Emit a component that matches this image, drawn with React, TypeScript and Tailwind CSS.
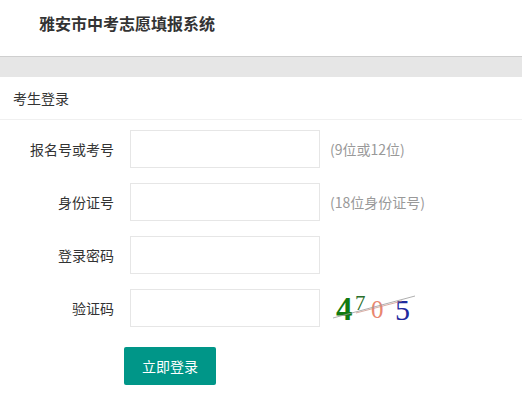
const cjk = { fontFamily: '"Noto Sans CJK SC", "Liberation Sans", sans-serif' }

function Captcha() {
  return (
    <svg width="92" height="38" viewBox="0 0 92 38" className="ml-[10px]">
      <text x="6" y="31" fill="#117a11" fontSize="33" fontWeight="bold" fontFamily="Liberation Serif, serif">4</text>
      <text x="25" y="21" fill="#2a6e2a" fontSize="21" fontFamily="Liberation Serif, serif">7</text>
      <text x="41" y="29" fill="#e9866f" fontSize="25" fontFamily="Liberation Serif, serif">0</text>
      <text x="65" y="31" fill="#1f2a9e" fontSize="30" fontFamily="Liberation Serif, serif">5</text>
      <line x1="3" y1="29" x2="85" y2="7" stroke="#9a9a9a" strokeWidth="0.8" />
      <line x1="26" y1="24" x2="72" y2="12" stroke="#c98a7c" strokeWidth="0.7" />
    </svg>
  )
}

function Row({ label, hint, children }: { label: string; hint?: string; children?: React.ReactNode }) {
  return (
    <div className="flex items-center h-[38px] mb-[15px]">
      <label className="w-[130px] pr-[16px] text-right text-[14px] text-[#333]">{label}</label>
      <input className="w-[190px] h-[38px] border border-[#e6e6e6] bg-white outline-none px-2" />
      {hint && <span className="ml-[10px] text-[14px] text-[#999]">{hint}</span>}
      {children}
    </div>
  )
}

export default function App() {
  return (
    <div className="w-full min-h-screen bg-white" style={cjk}>
      <div className="h-[56px] pl-[39px] pt-[12px]">
        <h1 className="text-[16px] leading-[22px] font-bold text-[#333]">雅安市中考志愿填报系统</h1>
      </div>
      <div className="h-[21px] border-t border-[#cfcfcf] bg-[#e6e6e6]" />
      <div className="h-[43px] px-[13px] flex items-center border-b border-[#f0f0f0] text-[14px] text-[#333]">
        考生登录
      </div>
      <form className="pt-[10px]">
        <Row label="报名号或考号" hint="(9位或12位)" />
        <Row label="身份证号" hint="(18位身份证号)" />
        <Row label="登录密码" />
        <Row label="验证码">
          <Captcha />
        </Row>
        <div className="pl-[124px] pt-[5px]">
          <button type="button" className="w-[92px] h-[38px] rounded-[2px] bg-[#009688] text-white text-[14px]">
            立即登录
          </button>
        </div>
      </form>
    </div>
  )
}
